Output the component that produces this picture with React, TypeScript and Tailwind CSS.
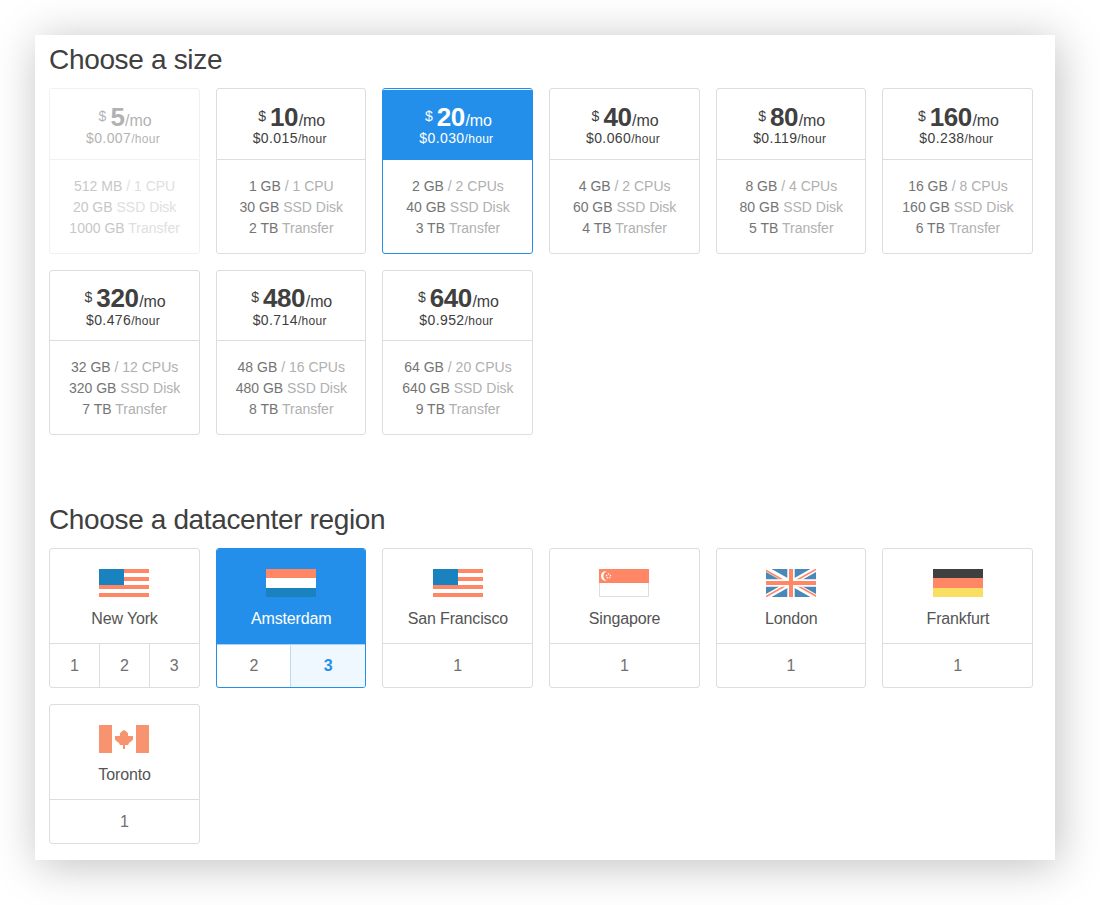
import React from "react";

type Plan = {
  price: string;
  hour: string;
  memory: string;
  cpus: string;
  disk: string;
  transfer: string;
  state?: "disabled" | "selected";
};

const plans: Plan[] = [
  { price: "5", hour: "0.007", memory: "512 MB", cpus: "1 CPU", disk: "20 GB", transfer: "1000 GB", state: "disabled" },
  { price: "10", hour: "0.015", memory: "1 GB", cpus: "1 CPU", disk: "30 GB", transfer: "2 TB" },
  { price: "20", hour: "0.030", memory: "2 GB", cpus: "2 CPUs", disk: "40 GB", transfer: "3 TB", state: "selected" },
  { price: "40", hour: "0.060", memory: "4 GB", cpus: "2 CPUs", disk: "60 GB", transfer: "4 TB" },
  { price: "80", hour: "0.119", memory: "8 GB", cpus: "4 CPUs", disk: "80 GB", transfer: "5 TB" },
  { price: "160", hour: "0.238", memory: "16 GB", cpus: "8 CPUs", disk: "160 GB", transfer: "6 TB" },
  { price: "320", hour: "0.476", memory: "32 GB", cpus: "12 CPUs", disk: "320 GB", transfer: "7 TB" },
  { price: "480", hour: "0.714", memory: "48 GB", cpus: "16 CPUs", disk: "480 GB", transfer: "8 TB" },
  { price: "640", hour: "0.952", memory: "64 GB", cpus: "20 CPUs", disk: "640 GB", transfer: "9 TB" },
];

function Spec({ value, label }: { value: string; label: string }) {
  return (
    <div className="whitespace-nowrap text-[#b0b0b0]">
      <span className="text-[#747474]">{value}</span> {label}
    </div>
  );
}

function PlanCard({ plan }: { plan: Plan }) {
  const selected = plan.state === "selected";
  return (
    <div
      className={`flex h-[165.4px] flex-col overflow-hidden rounded-[3px] border text-center ${
        selected ? "border-[#248feb]" : "border-[#dddddd]"
      } ${plan.state === "disabled" ? "opacity-40" : ""}`}
    >
      <div
        className={`h-[70.6px] shrink-0 border-b pt-[13.6px] ${
          selected
            ? "border-[#248feb] bg-[#248feb] text-white shadow-[inset_0_1px_0_#e8f4fe]"
            : "border-[#dddddd] text-[#404040]"
        }`}
      >
        <div className="h-[27.4px] pl-[1.4px] text-[16px] leading-[28px] whitespace-nowrap">
          <span className="relative -top-[5px] mr-1 text-[14px]">$</span>
          <span className="text-[26px] font-bold tracking-[-0.4px]">{plan.price}</span>
          <span className="pl-[0.6px] tracking-[-0.1px]">/mo</span>
        </div>
        <div className="h-4 pr-[2.6px] text-[14px] leading-4 whitespace-nowrap">
          <span className="tracking-[0.4px]">${plan.hour}</span>
          <span className="text-[12px] tracking-[0.3px]">/hour</span>
        </div>
      </div>
      <div className="pt-[15.6px] pl-[0.6px] text-[14px] leading-[21px]">
        <Spec value={plan.memory} label={`/ ${plan.cpus}`} />
        <Spec value={plan.disk} label="SSD Disk" />
        <Spec value={plan.transfer} label="Transfer" />
      </div>
    </div>
  );
}

function UsaFlag() {
  return (
    <svg width="50" height="28" viewBox="0 0 50 28" shapeRendering="crispEdges">
      <path fill="#fff" d="M0 0h50v28H0z" />
      <path fill="#ff8765" d="M0 0h50v4H0zM0 8h50v4H0zM0 16h50v4H0zM0 24h50v4H0z" />
      <path fill="#1a82bf" d="M0 0h25v16H0z" />
    </svg>
  );
}

function DutchFlag() {
  return (
    <svg width="50" height="28" viewBox="0 0 50 28" shapeRendering="crispEdges">
      <path fill="#ff8765" d="M0 0h50v9H0z" />
      <path fill="#fff" d="M0 9h50v10H0z" />
      <path fill="#1a82bf" d="M0 19h50v9H0z" />
    </svg>
  );
}

function SingaporeFlag() {
  return (
    <svg width="50" height="28" viewBox="0 0 50 28">
      <path fill="#fff" stroke="#dddddd" d="M.5 .5h49v27h-49z" />
      <path fill="#ff8765" d="M0 0h50v14H0z" />
      <path fill="#fff" d="M7.6 2.4a4.7 4.7 0 1 0 0 9.2A4.9 4.9 0 0 1 7.6 2.4z" />
      <g fill="#fff">
        <circle cx="9.5" cy="5" r=".8" />
        <circle cx="7.6" cy="6.6" r=".8" />
        <circle cx="11.4" cy="6.6" r=".8" />
        <circle cx="8.4" cy="8.7" r=".8" />
        <circle cx="10.6" cy="8.7" r=".8" />
      </g>
    </svg>
  );
}

function BritishFlag() {
  return (
    <svg width="50" height="28" viewBox="0 0 50 28">
      <path fill="#4a88b8" d="M0 0h50v28H0z" />
      <path stroke="#fff" strokeWidth="5.4" d="M0 0l50 28M50 0L0 28" />
      <path stroke="#ff8765" strokeWidth="1.7" d="M-.7 1.1L24 15M51 27.5L25 13M50 .4L25 14.4M0 27.6L25 13.6" />
      <path fill="#fff" d="M21.3 0h7.4v28h-7.4zM0 10.2h50v7.6H0z" />
      <path fill="#ff8765" d="M23 0h4v28h-4zM0 12h50v4H0z" />
    </svg>
  );
}

function GermanFlag() {
  return (
    <svg width="50" height="28" viewBox="0 0 50 28" shapeRendering="crispEdges">
      <path fill="#404040" d="M0 0h50v9H0z" />
      <path fill="#ff8765" d="M0 9h50v10H0z" />
      <path fill="#f8df62" d="M0 19h50v9H0z" />
    </svg>
  );
}

function CanadianFlag() {
  return (
    <svg width="50" height="28" viewBox="0 0 50 28" fill="#f7936f">
      <path d="M0 0h13v28H0zM37 0h13v28H37z" />
      <path d="M25 5l2 1.2 2 2V11h5v3.5l-1 1.3-3 2.2-1 2h-3v4h-2v-4h-3l-1-2-3-2.2-1-1.3V11h5V8.200l2-2z" />
    </svg>
  );
}

type Region = {
  city: string;
  Flag: () => React.JSX.Element;
  zones: string[];
  selectedZone?: string;
};

const regions: Region[] = [
  { city: "New York", Flag: UsaFlag, zones: ["1", "2", "3"] },
  { city: "Amsterdam", Flag: DutchFlag, zones: ["2", "3"], selectedZone: "3" },
  { city: "San Francisco", Flag: UsaFlag, zones: ["1"] },
  { city: "Singapore", Flag: SingaporeFlag, zones: ["1"] },
  { city: "London", Flag: BritishFlag, zones: ["1"] },
  { city: "Frankfurt", Flag: GermanFlag, zones: ["1"] },
  { city: "Toronto", Flag: CanadianFlag, zones: ["1"] },
];

function RegionCard({ region }: { region: Region }) {
  const { city, Flag, zones, selectedZone } = region;
  const selected = selectedZone !== undefined;
  return (
    <div
      className={`flex h-[140px] flex-col overflow-hidden rounded-[3px] border text-[16px] ${
        selected ? "border-[#248feb]" : "border-[#dddddd]"
      }`}
    >
      <div
        className={`flex shrink-0 flex-col items-center pt-5 ${
          selected ? "h-[95px] bg-[#248feb] text-white" : "h-[94px] text-[#545454]"
        }`}
      >
        <Flag />
        <div className="mt-3 pl-[0.4px] leading-5 tracking-[-0.15px] whitespace-nowrap">{city}</div>
      </div>
      <div className={`flex grow border-t ${selected ? "border-[#a5d2f7]" : "border-[#dddddd]"}`}>
        {zones.map((zone, i) => (
          <div
            key={zone}
            className={`flex flex-1 items-center justify-center ${i > 0 ? "border-l" : ""} ${
              selected ? "border-[#b9dcf8]" : "border-[#dddddd]"
            } ${i > 0 && selected ? "-ml-px" : ""} ${
              zone === selectedZone ? "bg-[#eff7ff] font-bold text-[#248feb]" : "text-[#707070]"
            }`}
          >
            {zone}
          </div>
        ))}
      </div>
    </div>
  );
}

export default function App() {
  return (
    <div className="h-[905px] w-[1100px] overflow-hidden bg-white p-[35px] font-['Liberation_Sans',Arial,sans-serif]">
      <main className="h-[825px] w-[1020px] bg-white px-[14px] pt-2 shadow-[3px_5px_42px_rgba(0,0,0,0.25)]">
        <section className="h-[460px]">
          <h2 className="h-[45.4px] text-[28px] leading-[33px] tracking-[-0.33px] text-[#404040]">Choose a size</h2>
          <div className="grid w-[984px] grid-cols-6 gap-4">
            {plans.map((plan) => (
              <PlanCard key={plan.price} plan={plan} />
            ))}
          </div>
        </section>
        <section>
          <h2 className="h-[45px] text-[28px] leading-[33px] tracking-[-0.36px] text-[#404040]">
            Choose a datacenter region
          </h2>
          <div className="grid w-[984px] grid-cols-6 gap-4">
            {regions.map((region) => (
              <RegionCard key={region.city} region={region} />
            ))}
          </div>
        </section>
      </main>
    </div>
  );
}
